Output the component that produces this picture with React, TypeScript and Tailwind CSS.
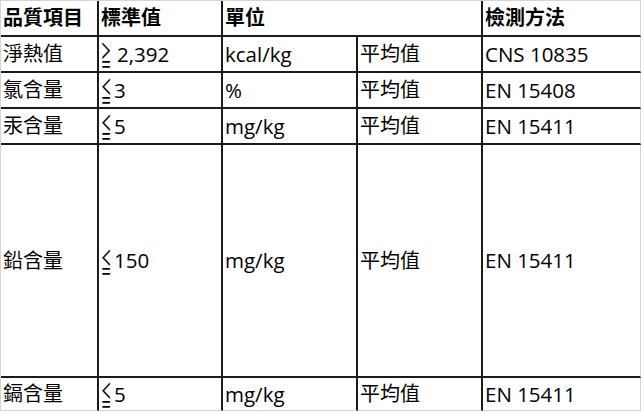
import React from "react";

const font = {
  fontFamily: '"Open Sans", "Noto Sans CJK TC", sans-serif',
};

function Rel({ sym, rest, gap }: { sym: string; rest: string; gap?: boolean }) {
  return (
    <span className="inline-flex items-center">
      <span className="inline-block w-[10px] overflow-visible">
        <span
          className="inline-block origin-left scale-x-[0.38] text-[27px] leading-none translate-y-[1px]"
          style={{ fontFamily: '"Noto Sans CJK TC", sans-serif' }}
        >
          {sym}
        </span>
      </span>
      {gap ? <span className="inline-block w-[6px]" /> : <span className="inline-block w-[3px]" />}
      <span className="text-[20.5px]">{rest}</span>
    </span>
  );
}

const cell = "flex items-center pl-[2px] border-r-2 border-b-2 border-[#1c1c1c] whitespace-nowrap";
const lastCol = "flex items-center pl-[2px] border-b-2 border-[#1c1c1c] border-r border-r-[#d4d4d4] whitespace-nowrap";
const lastRow = "flex items-center pl-[2px] border-r-2 border-r-[#1c1c1c] border-b border-b-[#d4d4d4] whitespace-nowrap";
const lastBoth = "flex items-center pl-[2px] border-r border-b border-[#d4d4d4] whitespace-nowrap";

export default function App() {
  const rows: { name: string; sym: string; val: string; gap?: boolean; unit: string; h: string }[] = [
    { name: "淨熱值", sym: "≧", val: "2,392", gap: true, unit: "kcal/kg", h: "h-[36px]" },
    { name: "氯含量", sym: "≦", val: "3", unit: "%", h: "h-[36px]" },
    { name: "汞含量", sym: "≦", val: "5", unit: "mg/kg", h: "h-[36px]" },
    { name: "鉛含量", sym: "≦", val: "150", unit: "mg/kg", h: "h-[233px]" },
    { name: "鎘含量", sym: "≦", val: "5", unit: "mg/kg", h: "h-[33px]" },
  ];
  const methods = ["CNS 10835", "EN 15408", "EN 15411", "EN 15411", "EN 15411"];
  return (
    <div className="w-[644px] h-[412px] bg-white text-black text-[20px] leading-none" style={font}>
      <div className="grid grid-cols-[98px_124px_135px_125px_158px] w-[641px] border-l border-t border-[#d4d4d4]">
        <div className={`${cell} h-[36px] font-bold`}>品質項目</div>
        <div className={`${cell} h-[36px] font-bold`}>標準值</div>
        <div className={`${cell} h-[36px] font-bold col-span-2`}>單位</div>
        <div className={`${lastCol} h-[36px] font-bold`}>檢測方法</div>
        {rows.map((r, i) => {
          const isLast = i === rows.length - 1;
          const c = isLast ? lastRow : cell;
          const lc = isLast ? lastBoth : lastCol;
          return (
            <React.Fragment key={i}>
              <div className={`${c} ${r.h}`}>{r.name}</div>
              <div className={`${c} ${r.h}`}>
                <Rel sym={r.sym} rest={r.val} gap={r.gap} />
              </div>
              <div className={`${c} ${r.h} text-[20.5px]`}>{r.unit}</div>
              <div className={`${c} ${r.h}`}>平均值</div>
              <div className={`${lc} ${r.h} text-[20.5px]`}>{methods[i]}</div>
            </React.Fragment>
          );
        })}
      </div>
    </div>
  );
}
